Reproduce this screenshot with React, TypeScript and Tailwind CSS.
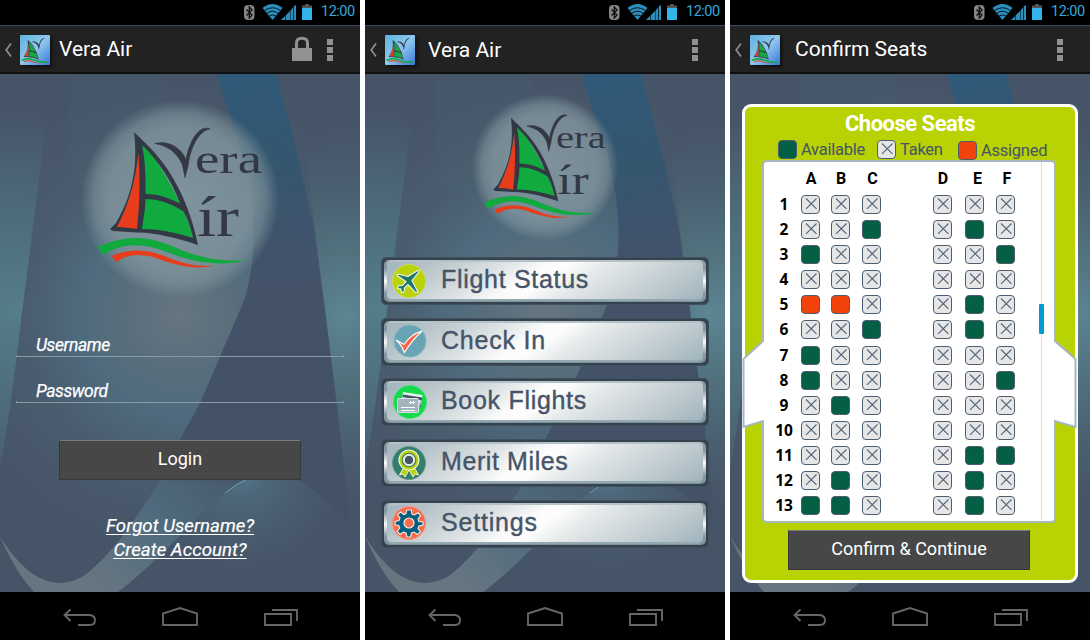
import React from "react";

function SailMark() {
  return (
    <g>
      <path d="M138.500 152 C135 184 128 206 116 228 L138 230 C141 203 141 178 138.500 152Z" fill="#e93c1c" />
      <path d="M141 139 C156 158 184 203 194 240 C178 234 160 231 141 230 C146 200 145 165 141 139Z" fill="#10aa3f" />
      <path d="M134 132 C146 144 156 152 168 170 C184 194 193 221 198 245 C174 237 152 232 137 232.5 L113 231 L110 229 L116 223 C133 194 138 165 134 132Z M138.500 153 C135 184 128 206 117 227 C124 227 131 228 137 229 C140 203 140 178 138.500 153Z M142 145 C146 165 145.500 180 145.500 194 C160 194 170 199 180 203.500 C172 181 157 159 142 145Z M145.500 199 C145.500 210 143 220 142 229 C161 229 177 233 193 238 C191 228 187 217 183 211 C170 203 158 199 145.500 199Z" fill="#333845" fillRule="evenodd" />
      <path d="M97.500 247 C126 234 149 236 174 247 C202 259 222 262 248 260 C220 267 195 263 167 252 C145 243 123 242 103 255Z" fill="#10aa3f" />
      <path d="M111.500 256 C133 247 151 250 169 258 C187 265 201 267 214 265.500 C196 270 181 266 164 261 C147 254 131 252 116 262Z" fill="#e93c1c" />
    </g>
  );
}

function Gull() {
  return <path d="M155 143.500 C168 140 182 148 186 160 C189 142 199 124 210 129 C201 130 191 143 188 166 L185 177.500 L182.500 165 C177 152 168 146 155 143.500Z" fill="#333845" stroke="#333845" strokeWidth=".7" />;
}

function Logo() {
  return (
    <g>
      <circle cx="180" cy="199" r="99" fill="url(#halo)" />
      <SailMark />
      <Gull />
      <g fill="#333845" fontFamily="'Liberation Serif', serif">
        <text x="195" y="172.500" fontSize="42" textLength="67" lengthAdjust="spacingAndGlyphs">era</text>
        <text x="197" y="235.500" fontSize="58" textLength="42" lengthAdjust="spacingAndGlyphs">ír</text>
      </g>
    </g>
  );
}

function Backdrop({ logo }: { logo?: string }) {
  return (
    <svg className="absolute inset-0 h-full w-full" viewBox="0 74 360 518" preserveAspectRatio="none">
      <defs>
        <radialGradient id="side" gradientUnits="userSpaceOnUse" cx="345" cy="315" r="190">
          <stop offset="0" stopColor="#5c8593" />
          <stop offset=".3" stopColor="#52737f" />
          <stop offset=".65" stopColor="#4a6070" />
          <stop offset="1" stopColor="#465467" />
        </radialGradient>
        <radialGradient id="left" gradientUnits="userSpaceOnUse" cx="16" cy="310" r="200">
          <stop offset="0" stopColor="#557d89" />
          <stop offset=".5" stopColor="#4d6b7a" />
          <stop offset="1" stopColor="#465467" />
        </radialGradient>
        <radialGradient id="middle" gradientUnits="userSpaceOnUse" cx="180" cy="315" r="235">
          <stop offset="0" stopColor="#667581" />
          <stop offset=".22" stopColor="#5a6e7c" />
          <stop offset=".42" stopColor="#4e6b7d" />
          <stop offset=".65" stopColor="#4a5d6e" />
          <stop offset="1" stopColor="#465467" />
        </radialGradient>
        <linearGradient id="band" gradientUnits="userSpaceOnUse" x1="250" y1="74" x2="275" y2="300">
          <stop offset="0" stopColor="#305979" />
          <stop offset=".4" stopColor="#34566f" />
          <stop offset=".75" stopColor="#40536b" />
          <stop offset="1" stopColor="#445267" />
        </linearGradient>
        <linearGradient id="ribbon" gradientUnits="userSpaceOnUse" x1="232" y1="440" x2="85" y2="580">
          <stop offset="0" stopColor="#465467" />
          <stop offset=".25" stopColor="#4a6072" />
          <stop offset=".55" stopColor="#4f6b7d" />
          <stop offset=".85" stopColor="#617380" />
          <stop offset="1" stopColor="#667580" />
        </linearGradient>
        <linearGradient id="fade" gradientUnits="userSpaceOnUse" x1="0" y1="420" x2="0" y2="500">
          <stop offset="0" stopColor="#445267" />
          <stop offset="1" stopColor="#445267" stopOpacity="0" />
        </linearGradient>
        <radialGradient id="wave" gradientUnits="userSpaceOnUse" cx="240" cy="470" r="100">
          <stop offset="0" stopColor="#53788a" />
          <stop offset=".3" stopColor="#4c6678" />
          <stop offset=".7" stopColor="#485b6d" />
          <stop offset="1" stopColor="#465467" />
        </radialGradient>
        <radialGradient id="halo">
          <stop offset="0" stopColor="#8598a0" stopOpacity=".9" />
          <stop offset=".72" stopColor="#80949d" stopOpacity=".83" />
          <stop offset=".86" stopColor="#80949d" stopOpacity=".6" />
          <stop offset="1" stopColor="#80949d" stopOpacity="0" />
        </radialGradient>
      </defs>
      <rect y="74" width="180" height="518" fill="url(#left)" />
      <rect x="180" y="74" width="180" height="518" fill="url(#side)" />
      <path d="M52 74 L48 110 L21 320 Q12 400 0 470 V592 H360 V530 L348 510 L325 310 L300 110 V74Z" fill="url(#middle)" />
      <path d="M70 172 C88 204 130 207 166 142 V74 H70Z" fill="#51697a" opacity=".13" />
      <path d="M217 74 H276 L300 165 L314 230 L325 310 L337 405 L348 500 L350 592 H100 L132 521 L160 480 L180 440 L200 403 L240 310 C251 285 255 255 253 215 C248 154 229 120 217 74Z" fill="url(#band)" />
      <path d="M245 455 H160 L174 452 L160 480 C131 527 112 553 85 575 C58 592 28 582 0 536 C10 560 22 579 34 592 H120 L245 490Z" fill="url(#ribbon)" />
      <path d="M0 470 L60 440 H180 L160 480 C131 527 112 553 85 575 C58 592 28 582 0 536Z" fill="url(#middle)" />
      <path d="M118 592 C150 568 180 535 208 507 C222 494 235 485 246 479 C277 464 306 480 332 507 L362 540 V592Z" fill="url(#wave)" />
      <path d="M180 440 L188 424 H338 L346 500 L332 507 C306 480 277 464 246 479 C220 490 180 480 160 480Z" fill="url(#fade)" />
      <path d="M225 493 Q236 484 247 479" stroke="#78a3ad" strokeWidth=".9" fill="none" />
      {logo && <g transform={logo}><Logo /></g>}
    </svg>
  );
}

function StatusBar() {
  return (
    <div className="flex h-[25px] shrink-0 items-start justify-end bg-black pr-[5px]">
      <svg width="72" height="25" viewBox="242 0 72 25" className="mr-[7px]">
        <rect x="244" y="5" width="10.500" height="15" rx="4" fill="#858585" />
        <path d="M246.500 9.500 L252 15 L249.300 18 V7 L252 10 L246.500 15.500" fill="none" stroke="#111" strokeWidth="1.300" />
        <path d="M262.500 8 Q272.500 0 282.500 8 L272.500 20Z" fill="#2b8fbd" />
        <path d="M264.500 10.500 Q272.500 5 280.500 10.500 M266.500 13.500 Q272.500 9 278.500 13.500 M268.500 16.300 Q272.500 13.500 276.500 16.300" stroke="#071218" strokeWidth="1" fill="none" />
        <path d="M281 20 L285 16 V20Z M285.600 15.400 L290 11 V20 H285.600Z M290.500 10.500 L293 7.500 V20 H290.500Z M293.700 6.500 L296 5 V20 H293.700Z" fill="#2b8fbd" />
        <path d="M302 8 V5.500 H305 V4 H309 V5.500 H312 V8Z" fill="#555" />
        <rect x="302" y="8" width="10" height="12" fill="#33b5e9" />
      </svg>
      <span className="mt-px w-[34px] whitespace-nowrap text-[14.500px] leading-[22px] tracking-[-0.5px] text-[#33a9dc]">12:00</span>
    </div>
  );
}

function ActionBar({ title, lock, gap, drop }: { title: string; lock?: boolean; gap: string; drop?: string }) {
  return (
    <div className="flex h-[49px] shrink-0 items-center border-t border-b-2 border-t-[#3b4b66] border-b-[#101010] bg-[#222222]">
      <svg width="20" height="46" viewBox="0 26 20 46" className="shrink-0">
        <path d="M11 43.500 L6.200 50 L11 56.500" fill="none" stroke="#8f8f8f" strokeWidth="1.700" />
      </svg>
      <svg width="30" height="30" viewBox="0 0 30 30" className="mt-px shrink-0 shadow-[2px_2px_3px_#111]">
        <defs>
          <linearGradient id="tile" x1="0" y1="0" x2="1" y2="1">
            <stop offset="0" stopColor="#5db3de" />
            <stop offset=".5" stopColor="#8fc7ee" />
            <stop offset="1" stopColor="#3777d8" />
          </linearGradient>
        </defs>
        <rect width="30" height="30" rx="1" fill="url(#tile)" />
        <g transform="translate(-15.500 -18) scale(.173)">
          <SailMark />
          <g transform="translate(-46 -46) scale(1.320)"><Gull /></g>
          <path d="M100 250 C126 236 149 238 174 249 C202 261 222 264 252 260" fill="none" stroke="#10aa3f" strokeWidth="8" />
        </g>
      </svg>
      <h1 className={`flex-1 whitespace-nowrap text-[21px] font-normal leading-[30px] text-white ${gap} ${drop ?? ""}`}>{title}</h1>
      <svg width="70" height="46" viewBox="285 26 70 46" className="mr-[5px] shrink-0" fill="#919191">
        {lock && (
          <g>
            <path d="M292 48 H312 V61 H292Z" />
            <path d="M296.500 49 V43 Q296.500 38.300 302 38.300 Q307.500 38.300 307.500 43 V49" fill="none" stroke="#919191" strokeWidth="3" />
          </g>
        )}
        <path d="M327 39 h6 v6 h-6Z M327 47 h6 v6 h-6Z M327 55 h6 v6 h-6Z" />
      </svg>
    </div>
  );
}

function NavBar() {
  return (
    <div className="h-12 shrink-0 bg-black">
      <svg width="360" height="48" viewBox="0 592 360 48" fill="none" stroke="#666666" strokeWidth="1.900">
        <path d="M70.500 609.500 L64.500 615 L70.500 621 M65 615 H90 Q95 616 95 620 Q95 625 90 625 H78" />
        <path d="M163 625 V613.500 L180 608 L197 613.500 V625Z" />
        <path d="M265 614 H291 V625 H265Z M272 610 H297 V621" />
      </svg>
    </div>
  );
}

function Phone({ title, lock, gap, drop, logo, children }: { title: string; lock?: boolean; gap: string; drop?: string; logo?: string; children: React.ReactNode }) {
  return (
    <section className="flex h-[640px] w-[360px] shrink-0 flex-col overflow-hidden">
      <StatusBar />
      <ActionBar title={title} lock={lock} gap={gap} drop={drop} />
      <main className="relative min-h-0 flex-1">
        <Backdrop logo={logo} />
        <div className="relative flex h-full flex-col">{children}</div>
      </main>
      <NavBar />
    </section>
  );
}

function DarkButton({ children, line }: { children: React.ReactNode; line: string }) {
  return (
    <button className={`flex h-10 w-[242px] shrink-0 justify-center border border-[#383838] border-t-[#7a7a7a] bg-[#474747] text-[18px] text-white ${line}`}>{children}</button>
  );
}

function Field({ label, height }: { label: string; height: string }) {
  return (
    <div className={`mx-4 flex flex-col justify-end ${height}`}>
      <span className="pl-5 text-[17.500px] italic leading-[20px] tracking-[-0.4px] text-white [-webkit-text-stroke:0.25px_white]">{label}</span>
      <span className="h-1 border border-t-0 border-[#8b9ba5]" />
    </div>
  );
}

const icons: Record<string, React.ReactNode> = {
  plane: (
    <g>
      <circle cx="17" cy="17" r="16.500" fill="#b9d20b" stroke="#cbdc5b" />
      <path d="M5.500 10 L16 12.500 L25 7 Q28 5.500 27 8 L20 16.500 L26 28 L23.500 28.500 L16 20.500 L12.500 24 L12 28 L9.500 28.500 L8.800 25 L5.500 24.500 L6 22 L10.500 21.500 L14 17.500 L5 11.500Z" fill="#1d786a" stroke="#f6faed" strokeWidth="1.100" />
    </g>
  ),
  check: (
    <g>
      <circle cx="18" cy="17" r="16" fill="#69a4b5" stroke="#86b3c1" />
      <path d="M4 16 L12 20.500 Q19 10 30 7 Q20 16 12.500 28.500 Q9 20 4 16Z" fill="#fb6546" stroke="#fff" strokeWidth="1.100" />
    </g>
  ),
  cards: (
    <g>
      <circle cx="18" cy="17" r="16.500" fill="#15da4c" stroke="#49e278" />
      <path d="M11 7 L30.500 10 L28.500 22 L9.500 18Z" fill="#e8f0f0" />
      <path d="M11 9.500 L30 12.500 V15.500 L10.500 12Z M28 15.500 L27.500 22 L29 22Z" fill="#465468" />
      <rect x="5.500" y="13.500" width="21" height="14" rx="1.500" fill="#a1b4bd" stroke="#dae3e5" />
      <path d="M9 22.500 H23 M9 25.500 H23 M17 17.500 H23 M18.500 16 V19 M21.500 16 V19" stroke="white" strokeWidth="1.200" />
    </g>
  ),
  medal: (
    <g>
      <circle cx="17" cy="17" r="16.500" fill="#347e6c" stroke="#64998c" />
      <path d="M12 21 L7.500 29 L11 28 L13 31 L17 24 L21 31 L23 28 L26.500 29 L22 21Z" fill="#b9d20b" stroke="#eff4dc" />
      <circle cx="17" cy="14" r="10" fill="#b9d20b" stroke="#f0f4dd" strokeWidth="1.200" />
      <circle cx="17" cy="14" r="6.800" fill="#dfe9c0" stroke="#347e6c" strokeWidth="1.100" />
      <circle cx="17" cy="14" r="4.700" fill="#465468" stroke="white" strokeWidth=".9" />
    </g>
  ),
  gear: (
    <g>
      <circle cx="17" cy="17" r="16.500" fill="#f86b4c" stroke="#f39b87" />
      <path d="M14.800 4 H19.200 L20 8 L22.500 9 L26 6.800 L28.500 9.500 L26 13 L27 15.500 L31 16 V19 L27 20 L26 22.500 L28.500 26 L25.500 28.500 L22 26 L19.500 27 L18.500 31 H15 L14 27 L11.500 26 L8 28.500 L5.200 25.500 L7.700 22 L6.700 19.500 L3 18.800 V15.500 L7 14.500 L8 12 L5.500 8.700 L8.500 6 L12 8.500 L14 7.500Z" fill="#075f80" stroke="#f5ebe5" strokeWidth="1.100" />
      <circle cx="17" cy="17" r="5" fill="#f86b4c" stroke="#f5ebe5" strokeWidth="1.200" />
    </g>
  ),
};

const menu = [
  ["plane", "Flight Status", "tracking-[0.7px]"],
  ["check", "Check In", "tracking-[0.8px]"],
  ["cards", "Book Flights", "tracking-[0.7px]"],
  ["medal", "Merit Miles", "tracking-[0.6px]"],
  ["gear", "Settings", "tracking-[0.8px]"],
];

function MenuButton({ icon, label, track }: { icon: string; label: string; track: string }) {
  return (
    <button className="flex h-12 w-[328px] rounded-[5px] border border-[#3f505f] bg-[#35434f] p-0.5 text-left">
      <span className="flex h-[42px] w-full rounded-[5px] bg-[linear-gradient(180deg,#8fa0ab,#8394a2_20%,#fafafa_50%,#8798a4_80%,#7d909c)] px-[3px] pb-px">
        <span className="flex h-[41px] w-full items-center rounded-[5px] border-y-2 border-t-[#b4c2c8] border-b-[#93a8b0] bg-[linear-gradient(146deg,#a5b7bf_3%,#b9c6cb_14%,#dde2e4_32%,#fbfbfb_44%,#fdfdfd_50%,#e5e9ea_60%,#cfd7da_74%,#b3c2c8_90%,#9fb2bc)] pl-[5px]">
          <svg width="34" height="34" viewBox="0 0 34 34" className="shrink-0 overflow-visible">{icons[icon]}</svg>
          <span className={`ml-[15px] -mt-[3px] whitespace-nowrap font-['Liberation_Sans',sans-serif] text-[25px] leading-[30px] text-[#465468] [-webkit-text-stroke:0.4px_#465468] ${track}`}>{label}</span>
        </span>
      </span>
    </button>
  );
}

const seats = [
  "xxxxxx", "xxaxax", "axxxxa", "xxxxxx", "ssxxax", "xxaxax", "axxxxx",
  "axxxxa", "xaxxxx", "xxxxxx", "xxxxaa", "xaxxax", "aaxxax",
];

function Seat({ kind }: { kind: string }) {
  const fill = kind === "a" ? "#055f45" : kind === "s" ? "#f2430b" : "#e6e6e6";
  return (
    <svg width="19" height="19" viewBox="0 0 19 19" className="shrink-0">
      <rect x=".5" y=".5" width="18" height="18" rx="3.500" fill={fill} stroke="#4d5d70" />
      {kind === "x" && <path d="M5 3.500 L15.500 13.800 M15.500 3.500 L5 13.800" stroke="#53647a" strokeWidth="1.100" />}
    </svg>
  );
}

const columns = "grid grid-cols-[34px_30px_31px_71px_32px_31px_19px]";

function SeatPanel() {
  return (
    <div className="relative mx-3 mt-[30px] flex h-[479px] flex-col items-center rounded-[9px] border-[3px] border-white bg-[#b8d203]">
      <svg className="absolute -left-[3px] -top-[3px]" width="336" height="479" viewBox="12 104 336 479">
        <path d="M37 161 H321 Q325 161 325 165 V341 L345.500 359 V427 L325 421 V518 Q325 522 321 522 H37 Q33 522 33 518 V421 L13.500 427 V359 L33 341 V165 Q33 161 37 161Z" fill="white" stroke="#a7b7c1" strokeWidth="2" />
        <path d="M311.500 162 V520" stroke="#d9dde4" />
        <rect x="309" y="304" width="5" height="30" rx="1" fill="#009bd5" />
      </svg>
      <h2 className="relative mt-[3px] text-[22px] font-bold leading-[28px] tracking-[-0.5px] text-white">Choose Seats</h2>
      <div className="relative flex h-[22px] w-full items-center pl-[33px] text-[16.500px] tracking-[-0.25px] text-[#465468]">
        <Seat kind="a" /><span className="ml-1 w-[76px] pt-[3px]">Available</span>
        <Seat kind="x" /><span className="ml-1 w-[58px] pt-[3px]">Taken</span>
        <span className="mt-0.5"><Seat kind="s" /></span><span className="ml-1 pt-[5px]">Assigned</span>
      </div>
      <div className="relative mt-[8px] w-full pl-[22px]">
        <div className={`${columns} h-[25px] w-[248px] text-[16px] font-bold leading-[22px] text-black`}>
          <span />
          <span className="w-5 text-center">A</span><span className="w-5 text-center">B</span>
          <span className="w-[21px] text-center">C</span><span className="w-5 text-center">D</span>
          <span className="w-[25px] text-center">E</span><span className="w-[22px] text-center">F</span>
        </div>
        <div className="pt-[2px]">
          {seats.map((row, r) => (
            <div key={r} className={`${columns} ${r === 5 ? "h-[26px]" : "h-[25px]"}`}>
              <span className="text-center font-['Noto_Sans',sans-serif] text-[15.500px] font-bold leading-[18px] text-black">{r + 1}</span>
              {row.split("").map((kind, c) => <Seat key={c} kind={kind} />)}
            </div>
          ))}
        </div>
      </div>
      <div className="relative mt-auto mb-[10px] -ml-[2px]"><DarkButton line="leading-[36px]">Confirm &amp; Continue</DarkButton></div>
    </div>
  );
}

export default function App() {
  return (
    <div className="flex h-[640px] w-[1090px] gap-[5px] overflow-hidden bg-white font-['Roboto',sans-serif]">
      <Phone title="Vera Air" lock gap="ml-[9px]" logo="translate(0 0)">
        <Field label="Username" height="mt-[261px] h-[22px]" />
        <Field label="Password" height="mt-6 h-[22px]" />
        <div className="mt-[37px] flex justify-center"><DarkButton line="leading-[36px]">Login</DarkButton></div>
        <div className="mt-[34px] flex flex-col items-center text-[18.700px] italic leading-6 text-white underline decoration-1 underline-offset-2 [-webkit-text-stroke:0.2px_white]">
          <a>Forgot Username?</a>
          <a>Create Account?</a>
        </div>
      </Phone>
      <Phone title="Vera Air" gap="ml-[13px]" drop="mt-[2px]" logo="translate(46.800 20) scale(.74)">
        <div className="mt-[183px] ml-4 flex flex-col gap-[12.700px]">
          {menu.map(([icon, label, track]) => <MenuButton key={label} icon={icon} label={label} track={track} />)}
        </div>
      </Phone>
      <Phone title="Confirm Seats" gap="ml-[15px]">
        <SeatPanel />
      </Phone>
    </div>
  );
}
